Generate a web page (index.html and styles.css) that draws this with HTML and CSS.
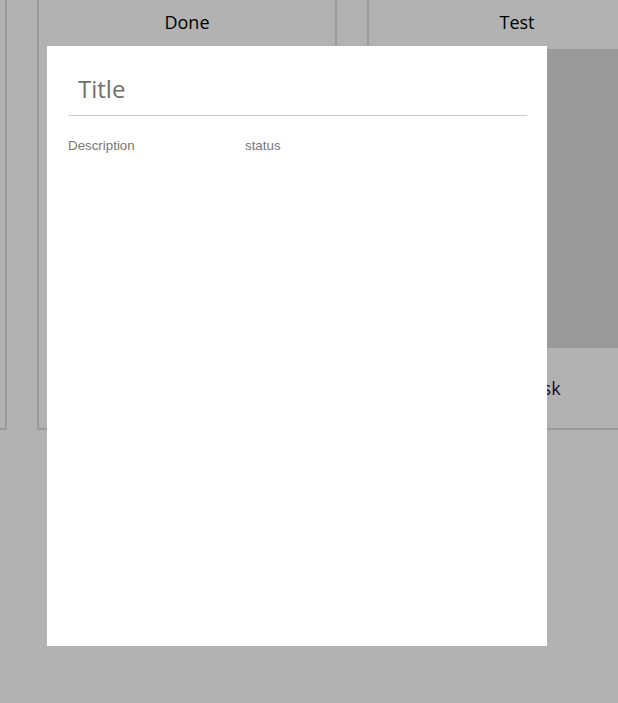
FILE: index.html
```html
<!DOCTYPE html>
<html lang="en">
<head>
<meta charset="utf-8">
<title>Board</title>
<link rel="stylesheet" href="styles.css">
</head>
<body>
<div class="board">
  <section class="column">
    <header class="column-title"></header>
    <div class="cards cards-empty"></div>
    <div class="add-task"></div>
  </section>
  <section class="column">
    <header class="column-title">Done</header>
    <div class="cards cards-empty"></div>
    <button class="add-task">Add a task</button>
  </section>
  <section class="column">
    <header class="column-title">Test</header>
    <div class="cards"></div>
    <button class="add-task">Add a task</button>
  </section>
</div>

<div class="overlay">
  <div class="modal">
    <input class="title-input" type="text" placeholder="Title">
    <div class="fields">
      <span class="field-label desc">Description</span>
      <span class="field-label">status</span>
    </div>
  </div>
</div>
</body>
</html>
```
FILE: styles.css
```css
html, body {
  margin: 0;
  padding: 0;
  background: #ffffff;
  overflow: hidden;
}

.board {
  display: flex;
  gap: 30px;
  margin-left: -293px;
}

.column {
  flex: 0 0 300px;
  box-sizing: border-box;
  height: 430px;
  border: 2px solid #dcdcdc;
  border-top: 0;
  display: flex;
  flex-direction: column;
}

.column-title {
  height: 49px;
  display: flex;
  align-items: center;
  justify-content: center;
  font-family: "Open Sans", sans-serif;
  font-size: 18px;
  color: #000;
  padding-bottom: 5px;
  box-sizing: border-box;
}

.cards {
  height: 299px;
  background: #dcdcdc;
}

.cards-empty {
  background: transparent;
}

.add-task {
  flex: 1;
  border: 0;
  background: transparent;
  font-family: "Open Sans", sans-serif;
  font-size: 18px;
  color: #0b1440;
  padding: 0;
}

.overlay {
  position: fixed;
  inset: 0;
  background: rgba(0, 0, 0, 0.3);
}

.modal {
  position: absolute;
  left: 47px;
  top: 46px;
  width: 500px;
  height: 600px;
  box-sizing: border-box;
  padding: 20px 20px 20px 21px;
  background: #fff;
}

.title-input {
  display: block;
  width: 459px;
  height: 50px;
  box-sizing: border-box;
  border: 0;
  border-bottom: 1px solid #cccccc;
  padding: 0 10px 4px;
  font-family: "Open Sans", sans-serif;
  font-size: 24px;
  color: #333;
  outline: none;
  background: transparent;
}

.title-input::placeholder {
  color: #6f6f6f;
}

.fields {
  display: flex;
  margin-top: 22px;
  font-family: "Liberation Sans", Arial, sans-serif;
  font-size: 13.33px;
  color: #777;
}

.field-label.desc {
  width: 177px;
}
```
